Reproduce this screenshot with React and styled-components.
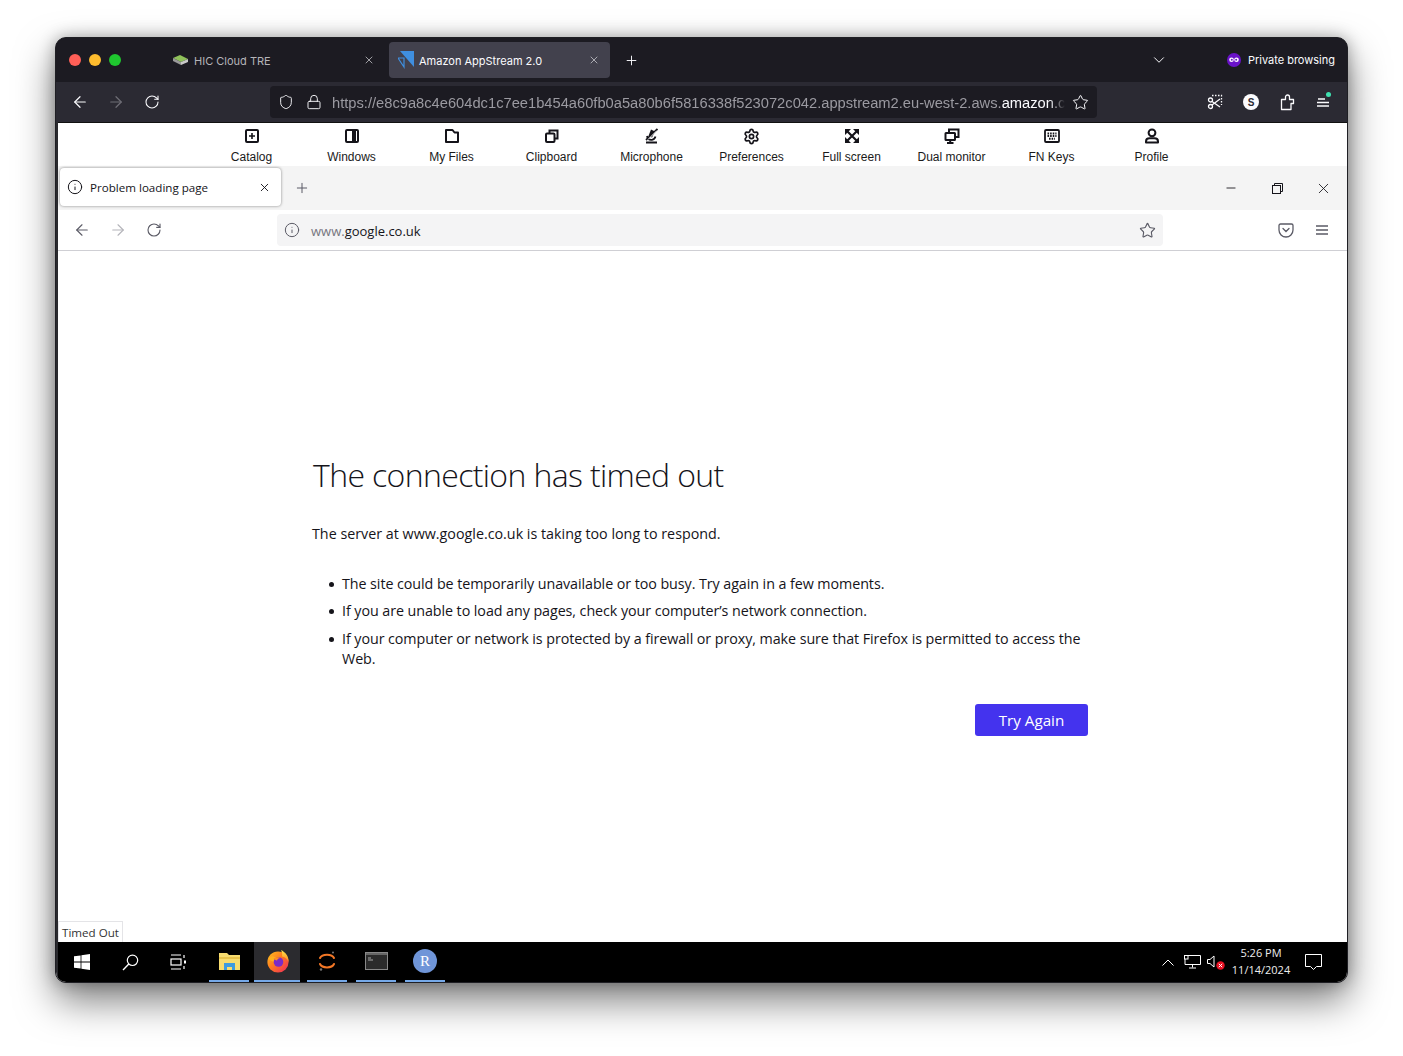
import React from 'react'
import styled, { createGlobalStyle } from 'styled-components'
import { ArrowLeft, ArrowRight, RotateCw, Star, Plus, X, ChevronDown, Info, Lock, Shield, Settings, Minus } from 'lucide-react'

const GlobalStyle = createGlobalStyle`
    html, body { margin: 0; padding: 0; background: #fff; }
    body { font-family: "Liberation Sans", Arial, sans-serif; }
    * { box-sizing: border-box; }
`

const Page = styled.div`
    width: 1403px;
    height: 1056px;
    padding: 37px 0 0 55px;
    overflow: hidden;
    background: #fff;
`

const Window = styled.div`
    width: 1293px;
    height: 946px;
    display: flex;
    flex-direction: column;
    border: 1px solid #1f1f24;
    border-radius: 11px;
    overflow: hidden;
    background: #1c1b22;
    box-shadow: 0 18px 38px rgba(0, 0, 0, .5), 0 0 16px rgba(0, 0, 0, .3);
`

const TitleBar = styled.div`
    height: 44px;
    flex: none;
    display: flex;
    align-items: center;
    background: #1c1b22;
    color: #fbfbfe;
`

const Lights = styled.div`
    width: 106px;
    padding-left: 13px;
    display: flex;
    gap: 8px;
    flex: none;
`

const Light = styled.span`
    width: 12px;
    height: 12px;
    border-radius: 50%;
    background: ${({ $c }) => $c};
`

const DarkTab = styled.div`
    width: 221px;
    height: 36px;
    margin-left: ${({ $ml }) => $ml || 0}px;
    padding: 0 ${({ $pr }) => $pr}px 0 ${({ $pl }) => $pl}px;
    flex: none;
    display: flex;
    align-items: center;
    border-radius: 4px;
    font-family: Inter, sans-serif;
    font-size: 11px;
    color: ${({ $on }) => ($on ? '#fbfbfe' : '#b4b4b8')};
    background: ${({ $on }) => ($on ? '#42414d' : 'transparent')};
    svg.favicon { margin-right: 5px; flex: none; }
    span { flex: 1; margin-top: 1px; }
`

const PrivateLabel = styled.div`
    margin-left: auto;
    padding-right: 12px;
    display: flex;
    align-items: center;
    gap: 7px;
    font-family: Inter, sans-serif;
    font-size: 11px;
    color: #fbfbfe;
`

const NavBar = styled.div`
    height: 40px;
    flex: none;
    display: flex;
    align-items: center;
    padding: 0 6px;
    background: #2b2a33;
    color: #fbfbfe;
`

const NavButton = styled.div`
    width: 36px;
    height: 32px;
    flex: none;
    display: flex;
    align-items: center;
    justify-content: center;
    position: relative;
    margin-left: ${({ $ml }) => $ml || 0}px;
    color: ${({ $c }) => $c || 'inherit'};
`

const UrlBar = styled.div`
    width: 827px;
    height: 32px;
    margin: 0 100px 0 100px;
    padding: 0 8px;
    display: flex;
    align-items: center;
    flex: none;
    border-radius: 4px;
    background: #1c1b22;
`

const UrlText = styled.div`
    width: 733px;
    margin: 2px 0 0 10px;
    overflow: hidden;
    white-space: nowrap;
    font-size: 14.7px;
    color: #9b9aa1;
    -webkit-mask-image: linear-gradient(to left, transparent, #000 16px);
    mask-image: linear-gradient(to left, transparent, #000 16px);
    b { font-weight: 400; color: #fbfbfe; }
`

const Dot = styled.span`
    position: absolute;
    top: 6px;
    right: 10px;
    width: 5px;
    height: 5px;
    border-radius: 50%;
    background: #3fe1b0;
`

const Remote = styled.div`
    flex: 1;
    min-height: 0;
    display: flex;
    flex-direction: column;
    border-left: 2px solid #2a2a2e;
    background: #fff;
`

const ToolBar = styled.div`
    height: 44px;
    flex: none;
    display: flex;
    justify-content: center;
    padding-right: 2px;
    background: #fff;
    border-top: 1px solid #111;
`

const Tool = styled.div`
    width: 100px;
    padding-top: 5px;
    display: flex;
    flex-direction: column;
    align-items: center;
    gap: 6px;
    font-size: 12px;
    line-height: 14px;
    color: #1a1a1a;
`

const ToolIcon = styled.div`
    height: 16px;
    display: flex;
    align-items: center;
    justify-content: center;
    color: #15141a;
`

const TabStrip = styled.div`
    height: 44px;
    flex: none;
    display: flex;
    align-items: center;
    padding-left: 2px;
    background: #f4f4f4;
    color: #15141a;
`

const LightTab = styled.div`
    width: 221px;
    height: 38px;
    margin-top: -2px;
    padding: 0 10px 0 7px;
    display: flex;
    align-items: center;
    border-radius: 4px;
    background: #fff;
    box-shadow: 0 0 3px rgba(0, 0, 0, .45);
    font-family: "Open Sans", sans-serif;
    font-size: 11.6px;
    span { flex: 1; margin: 1px 0 0 7px; }
`

const WinControls = styled.div`
    margin-left: auto;
    display: flex;
    padding-right: 1px;
`

const WinControl = styled.div`
    width: 46px;
    height: 32px;
    display: flex;
    align-items: center;
    justify-content: center;
`

const InnerNav = styled.div`
    height: 41px;
    flex: none;
    display: flex;
    align-items: center;
    padding-left: 6px;
    border-bottom: 1px solid #cfcfd4;
    background: #fff;
    color: #5b5b66;
`

const InnerUrl = styled.div`
    width: 886px;
    height: 32px;
    margin: 0 105px 0 105px;
    padding: 0 7px;
    display: flex;
    align-items: center;
    flex: none;
    border-radius: 4px;
    background: #f4f4f5;
    font-family: "Open Sans", sans-serif;
    font-size: 13px;
    color: #15141a;
    i { font-style: normal; color: #77767f; }
    span { flex: 1; margin: 1px 0 0 11px; }
`

const Content = styled.main`
    flex: 1;
    min-height: 0;
    position: relative;
    padding: 199px 0 0 254px;
    background: #fff;
    font-family: "Open Sans", sans-serif;
    font-size: 14.3px;
    color: #15141a;
`

const ErrorBox = styled.div`
    width: 776px;
`

const Heading = styled.h1`
    margin: 0 0 0 1px;
    font-size: 32px;
    line-height: 50px;
    font-weight: 300;
    letter-spacing: -.64px;
`

const Intro = styled.p`
    margin: 24px 0 0;
    line-height: 20px;
`

const Reasons = styled.ul`
    margin: 30px 0 0;
    padding: 0 0 0 30px;
    list-style: none;
    letter-spacing: -.07px;
`

const Reason = styled.li`
    position: relative;
    line-height: 20px;
    margin-bottom: 7.4px;
    &::before {
        content: "";
        position: absolute;
        left: -13px;
        top: 8px;
        width: 5px;
        height: 5px;
        border-radius: 50%;
        background: #15141a;
    }
`

const ButtonRow = styled.div`
    display: flex;
    justify-content: flex-end;
    margin-top: 35px;
`

const TryAgain = styled.button`
    width: 113px;
    height: 32px;
    border: none;
    border-radius: 3px;
    background: #4433ee;
    color: #fff;
    font-family: inherit;
    font-size: 15.2px;
`

const StatusTip = styled.div`
    position: absolute;
    left: 0;
    bottom: 0;
    height: 21px;
    padding: 0 3px;
    display: flex;
    align-items: center;
    border: 1px solid #e4e4e7;
    border-bottom: none;
    background: #fff;
    font-size: 11.6px;
    color: #333;
`

const TaskBar = styled.div`
    height: 40px;
    flex: none;
    display: flex;
    align-items: center;
    background: #000;
    color: #fff;
`

const TaskIcon = styled.div`
    width: ${({ $w }) => $w || 48}px;
    height: 40px;
    flex: none;
    display: flex;
    align-items: center;
    justify-content: center;
`

const TaskApp = styled.div`
    width: ${({ $w }) => $w || 40}px;
    height: 40px;
    margin-left: ${({ $ml }) => $ml || 0}px;
    flex: none;
    display: flex;
    align-items: center;
    justify-content: center;
    background: ${({ $on }) => ($on ? '#2b2b2f' : 'transparent')};
    border-bottom: 2px solid #76a9e8;
`

const Tray = styled.div`
    margin-left: auto;
    padding-right: 14px;
    display: flex;
    align-items: center;
`

const Clock = styled.div`
    width: 72px;
    margin: -2px -4px 0 -3px;
    text-align: center;
    font-family: "Open Sans", sans-serif;
    font-size: 11px;
    line-height: 17.5px;
    color: #eee;
`

const RLogo = styled.div`
    width: 24px;
    height: 24px;
    border-radius: 50%;
    display: flex;
    align-items: center;
    justify-content: center;
    background: #6f95d8;
    color: #fff;
    font-family: "Liberation Serif", serif;
    font-size: 15px;
`

const ic = { width: 16, height: 16, viewBox: '0 0 16 16', fill: 'none', stroke: 'currentColor', strokeWidth: 2 }

const tools = [
    ['Catalog', <svg {...ic}><rect x="2" y="2" width="12" height="12" rx="1" /><path d="M8 5v6M5 8h6" strokeWidth="1.6" /></svg>],
    ['Windows', <svg {...ic}><rect x="2" y="2" width="12" height="12" rx="1" /><rect x="8" y="3" width="4" height="10" fill="currentColor" stroke="none" /></svg>],
    ['My Files', <svg {...ic}><path d="M2 2h6.500l2 2.500H14V14H2z" strokeLinejoin="round" /></svg>],
    ['Clipboard', <svg {...ic}><rect x="2" y="5.500" width="8.500" height="8.500" rx="1" /><path d="M5.500 5V2.500h8v8H11" /></svg>],
    ['Microphone', (
        <svg {...ic} strokeWidth="1.8">
            <path d="M7 1.500l4 2-3 6-3.500-1.500z" fill="currentColor" stroke="none" />
            <path d="M3 8c.5 3 3 4 5 3.800 1.500-.2 3-1.500 3.500-3.300M2 14.500h11M2 12L13.500 1" />
            <path d="M4 11.500L13 2.500" stroke="#fff" strokeWidth="1" />
        </svg>
    )],
    ['Preferences', <Settings size={17} strokeWidth={2.4} />],
    ['Full screen', (
        <svg width="16" height="16" viewBox="0 0 16 16" fill="currentColor">
            <path d="M1 1h6L1 7zM15 1H9l6 6zM1 15h6l-6-6zM15 15H9l6-6z" />
            <path d="M3 3l10 10M13 3L3 13" stroke="currentColor" strokeWidth="2.200" />
        </svg>
    )],
    ['Dual monitor', <svg {...ic}><rect x="1.500" y="5" width="9.500" height="7" rx=".5" /><path d="M5 4V1.500h9.500V9H12M6.200 12v2.500M3 15h6.500" /></svg>],
    ['FN Keys', <svg {...ic} strokeWidth="1.800"><rect x="1" y="2" width="14" height="12" rx="1" /><path d="M3.500 5.500h9M3.500 8h9M5 10.700h6" strokeDasharray="1.600 1" strokeWidth="1.900" /></svg>],
    ['Profile', <svg {...ic}><circle cx="8" cy="4.800" r="3.400" /><path d="M2 14.500v-1c0-2 1.500-3.200 3.500-3.200h5c2 0 3.500 1.200 3.500 3.200v1z" strokeLinejoin="round" /></svg>],
]

const Firefox = () => (
    <svg width="24" height="24" viewBox="-1 0 24 24">
        <defs>
            <linearGradient id="ffOuter" x1="0" y1="0" x2="1" y2="1">
                <stop offset="0" stopColor="#ffc21f" />
                <stop offset=".45" stopColor="#ff7a1f" />
                <stop offset="1" stopColor="#f0245f" />
            </linearGradient>
            <linearGradient id="ffFlame" x1="0" y1="0" x2="0" y2="1">
                <stop offset="0" stopColor="#ffe34a" />
                <stop offset="1" stopColor="#ff8a1f" />
            </linearGradient>
        </defs>
        <circle cx="12" cy="13" r="10.600" fill="url(#ffOuter)" />
        <path d="M15 1c4 2 8 6 7.600 12-2-4-4-5-6.600-5.500C16.500 5 16 3 15 1z" fill="url(#ffFlame)" />
        <path d="M2 9c2-1 4-2.500 5.500-1.500L11 9c-1.500 1-3 2-2 4-3-.5-5.500-1.500-7-4z" fill="#ffb01f" />
        <circle cx="12.500" cy="13" r="4.800" fill="#7b2bc7" />
        <path d="M7.500 9.500c2-1.500 5-1.800 7-.5-2 .2-3 1-3.500 2.500-1.500-.3-2.500-1-3.500-2z" fill="#ff8f1f" />
    </svg>
)

const App = () => (
    <Page>
        <GlobalStyle />
        <Window>
            <TitleBar>
                <Lights>
                    <Light $c="#ff5f57" />
                    <Light $c="#febc2e" />
                    <Light $c="#1fc72f" />
                </Lights>
                <DarkTab $pl={10} $pr={8}>
                    <svg className="favicon" width="17" height="12" viewBox="0 0 17 12">
                        <path d="M1 4l7-3 8 4-7 3z" fill="#8fc15a" />
                        <path d="M1 4l8 4v3L1 7z" fill="#9a9a9a" />
                        <path d="M9 8l7-3v3l-7 3z" fill="#c9c9c9" />
                    </svg>
                    <span>HIC Cloud TRE</span>
                    <X size={12} strokeWidth={1.4} color="#d8d8dc" />
                </DarkTab>
                <DarkTab $on $pl={9} $pr={10} $ml={6}>
                    <svg className="favicon" width="16" height="18" viewBox="0 0 16 18">
                        <path d="M2 0h14v16z" fill="#3f8fe0" />
                        <path d="M0 7h6v9z" fill="none" stroke="#3f8fe0" strokeWidth="1.200" />
                    </svg>
                    <span>Amazon AppStream 2.0</span>
                    <X size={12} strokeWidth={1.4} color="#d8d8dc" />
                </DarkTab>
                <NavButton $ml={3}>
                    <Plus size={15} strokeWidth={1.5} />
                </NavButton>
                <NavButton $ml={492}>
                    <ChevronDown size={18} strokeWidth={1.3} />
                </NavButton>
                <PrivateLabel>
                    <svg width="14" height="14" viewBox="0 0 14 14">
                        <circle cx="7" cy="7" r="7" fill="#6a12c9" />
                        <circle cx="4.500" cy="6.800" r="2.300" fill="#fff" />
                        <circle cx="9.500" cy="6.800" r="2.300" fill="#fff" />
                        <circle cx="4.800" cy="6.800" r="1" fill="#6a12c9" />
                        <circle cx="9.200" cy="6.800" r="1" fill="#6a12c9" />
                    </svg>
                    Private browsing
                </PrivateLabel>
            </TitleBar>
            <NavBar>
                <NavButton><ArrowLeft size={18} strokeWidth={1.6} /></NavButton>
                <NavButton $c="#6f6e76"><ArrowRight size={18} strokeWidth={1.6} /></NavButton>
                <NavButton><RotateCw size={16} strokeWidth={1.6} /></NavButton>
                <UrlBar>
                    <Shield size={16} strokeWidth={1.4} />
                    <Lock size={16} strokeWidth={1.4} style={{ marginLeft: 12 }} />
                    <UrlText>https://e8c9a8c4e604dc1c7ee1b454a60fb0a5a80b6f5816338f523072c042.appstream2.eu-west-2.aws.<b>amazon.com</b></UrlText>
                    <Star size={17} strokeWidth={1.4} style={{ marginLeft: 7 }} />
                </UrlBar>
                <NavButton>
                    <svg width="16" height="16" viewBox="0 0 16 16" fill="none" stroke="currentColor" strokeWidth="1.300">
                        <path d="M5 1.500h9.500V11" strokeDasharray="1.500 1.500" />
                        <circle cx="3.500" cy="12.500" r="2" />
                        <circle cx="3.500" cy="6" r="2" />
                        <path d="M5 7.500L13 13M5 11l8-6" />
                    </svg>
                </NavButton>
                <NavButton>
                    <svg width="16" height="16" viewBox="0 0 16 16">
                        <circle cx="8" cy="8" r="8" fill="#fbfbfe" />
                        <text x="8" y="11.500" textAnchor="middle" fontSize="10" fontWeight="700" fontFamily="Liberation Sans" fill="#2b2a33">S</text>
                    </svg>
                </NavButton>
                <NavButton>
                    <svg width="16" height="18" viewBox="-1 0 16 18" fill="none" stroke="currentColor" strokeWidth="1.300" strokeLinejoin="round">
                        <path d="M1.500 6.500h4V4a2 2 0 0 1 4 0v2.500h4v4h-2.500v6h-9.500z" />
                    </svg>
                </NavButton>
                <NavButton>
                    <svg width="14" height="12" viewBox="0 0 14 12" stroke="currentColor" strokeWidth="1.300">
                        <path d="M2 3h7M1 6.500h12M1 10h12" />
                    </svg>
                    <Dot />
                </NavButton>
            </NavBar>
            <Remote>
                <ToolBar>
                    {tools.map(([name, icon]) => (
                        <Tool key={name}><ToolIcon>{icon}</ToolIcon>{name}</Tool>
                    ))}
                </ToolBar>
                <TabStrip>
                    <LightTab>
                        <Info size={16} strokeWidth={1.5} />
                        <span>Problem loading page</span>
                        <X size={13} strokeWidth={1.7} />
                    </LightTab>
                    <NavButton $c="#5b5b66" $ml={3}>
                        <Plus size={16} strokeWidth={1.5} />
                    </NavButton>
                    <WinControls>
                        <WinControl><Minus size={14} strokeWidth={1.5} /></WinControl>
                        <WinControl>
                            <svg width="11" height="11" viewBox="0 0 11 11" fill="none" stroke="currentColor">
                                <rect x=".5" y="2.500" width="8" height="8" />
                                <path d="M2.500 2.500v-2h8v8h-2" />
                            </svg>
                        </WinControl>
                        <WinControl><X size={17} strokeWidth={1.2} /></WinControl>
                    </WinControls>
                </TabStrip>
                <InnerNav>
                    <NavButton><ArrowLeft size={18} strokeWidth={1.5} /></NavButton>
                    <NavButton $c="#b4b4ba"><ArrowRight size={18} strokeWidth={1.5} /></NavButton>
                    <NavButton><RotateCw size={16} strokeWidth={1.7} /></NavButton>
                    <InnerUrl>
                        <Info size={16} strokeWidth={1.5} color="#5b5b66" />
                        <span><i>www.</i>google.co.uk</span>
                        <Star size={17} strokeWidth={1.6} color="#5b5b66" />
                    </InnerUrl>
                    <NavButton>
                        <svg width="16" height="15" viewBox="0 0 16 15" fill="none" stroke="currentColor" strokeWidth="1.300">
                            <path d="M2.500 1h11A1.500 1.500 0 0 1 15 2.500V7a7 7 0 0 1-14 0V2.500A1.500 1.500 0 0 1 2.500 1z" />
                            <path d="M5 5.500l3 3 3-3" strokeLinecap="round" />
                        </svg>
                    </NavButton>
                    <NavButton>
                        <svg width="14" height="12" viewBox="0 0 14 12" stroke="currentColor" strokeWidth="1.300">
                            <path d="M1 2h12M1 6h12M1 10h12" />
                        </svg>
                    </NavButton>
                </InnerNav>
                <Content>
                    <ErrorBox>
                        <Heading>The connection has timed out</Heading>
                        <Intro>The server at www.google.co.uk is taking too long to respond.</Intro>
                        <Reasons>
                            <Reason>The site could be temporarily unavailable or too busy. Try again in a few moments.</Reason>
                            <Reason>If you are unable to load any pages, check your computer’s network connection.</Reason>
                            <Reason>If your computer or network is protected by a firewall or proxy, make sure that Firefox is permitted to access the Web.</Reason>
                        </Reasons>
                        <ButtonRow>
                            <TryAgain>Try Again</TryAgain>
                        </ButtonRow>
                    </ErrorBox>
                    <StatusTip>Timed Out</StatusTip>
                </Content>
                <TaskBar>
                    <TaskIcon>
                        <svg width="16" height="16" viewBox="0 0 16 16" fill="#fff">
                            <path d="M0 2.300l6.600-.9v6.200H0zM7.400 1.300L16 0v7.600H7.400zM0 8.400h6.600v6.200L0 13.700zM7.400 8.400H16V16l-8.600-1.300z" />
                        </svg>
                    </TaskIcon>
                    <TaskIcon>
                        <svg width="17" height="17" viewBox="0 0 17 17" fill="none" stroke="#fff" strokeWidth="1.200">
                            <circle cx="10.500" cy="6.300" r="5.200" />
                            <path d="M6.800 10L1 16" strokeWidth="1.400" />
                        </svg>
                    </TaskIcon>
                    <TaskIcon>
                        <svg width="17" height="16" viewBox="0 0 17 16" fill="none" stroke="#fff" strokeWidth="1.200">
                            <path d="M1 1h10M1 15h10M14 1v3M14 12v3" />
                            <rect x="1" y="5" width="10" height="6" />
                            <rect x="14" y="6.500" width="2" height="3" fill="#fff" stroke="none" />
                        </svg>
                    </TaskIcon>
                    <TaskApp $ml={7}>
                        <svg width="21" height="19" viewBox="0 0 21 19">
                            <path d="M0 1h8l2 2h11v15H0z" fill="#f7dc6f" />
                            <path d="M0 5h21v2H0z" fill="#e8c34a" />
                            <path d="M5 11h11v7h-3v-3H8v3H5z" fill="#3d9be0" />
                        </svg>
                    </TaskApp>
                    <TaskApp $on $w={46} $ml={5}><Firefox /></TaskApp>
                    <TaskApp $ml={7}>
                        <svg width="18" height="22" viewBox="0 0 18 22" fill="none">
                            <path d="M2 8c2-4.500 12-4.500 14 0M2 14c2 4.500 12 4.500 14 0" stroke="#f37726" strokeWidth="2" strokeLinecap="round" />
                            <circle cx="15" cy="2.500" r="1" fill="#777" />
                            <circle cx="3" cy="19.500" r="1.200" fill="#777" />
                        </svg>
                    </TaskApp>
                    <TaskApp $ml={9}>
                        <svg width="23" height="18" viewBox="0 0 23 18">
                            <rect x=".5" y=".5" width="22" height="17" fill="#2b2b2b" stroke="#888" />
                            <rect x="1" y="1" width="21" height="2" fill="#666" />
                            <path d="M3 6h3M3 8h5" stroke="#aaa" />
                        </svg>
                    </TaskApp>
                    <TaskApp $ml={9}><RLogo>R</RLogo></TaskApp>
                    <Tray>
                        <TaskIcon $w={24}>
                            <svg width="12" height="7" viewBox="0 0 12 7" fill="none" stroke="#fff"><path d="M.5 6.500L6 1l5.500 5.500" /></svg>
                        </TaskIcon>
                        <TaskIcon $w={24}>
                            <svg width="17" height="14" viewBox="0 0 17 14" fill="none" stroke="#fff">
                                <path d="M4 .5h12.500v9H1V4M8.500 9.500v3M5 13h7" />
                                <rect x=".5" y=".5" width="3.500" height="3.500" />
                            </svg>
                        </TaskIcon>
                        <TaskIcon $w={24}>
                            <svg width="18" height="15" viewBox="0 0 18 15">
                                <path d="M.5 4.500h2.500L7 1v11L3 8.500H.5z" fill="none" stroke="#fff" />
                                <circle cx="13.500" cy="10.500" r="4.200" fill="#e81123" />
                                <path d="M11.800 8.800l3.400 3.400M15.200 8.800l-3.400 3.400" stroke="#fff" />
                            </svg>
                        </TaskIcon>
                        <Clock>5:26 PM<br />11/14/2024</Clock>
                        <TaskIcon $w={40}>
                            <svg width="17" height="16" viewBox="0 0 17 16" fill="none" stroke="#fff">
                                <path d="M.5.500h16v12h-5l-3 3-3-3h-5z" />
                            </svg>
                        </TaskIcon>
                    </Tray>
                </TaskBar>
            </Remote>
        </Window>
    </Page>
)

export default App
